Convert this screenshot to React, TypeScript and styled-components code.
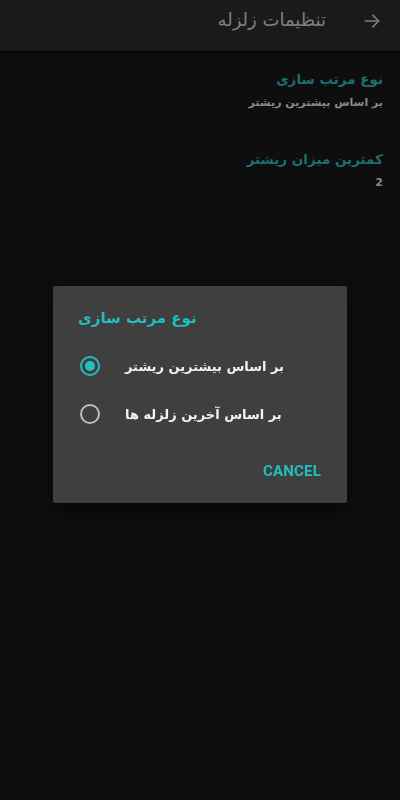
import React, { FC } from "react";
import styled, { createGlobalStyle } from "styled-components";

const GlobalStyle = createGlobalStyle`
  html, body {
    margin: 0;
    padding: 0;
    background: #0e0e0e;
  }
  #root {
    min-height: 100vh;
  }
`;

const persian = `"DejaVu Sans", "Noto Sans", sans-serif`;

const Page = styled.div`
  min-height: 100vh;
  background: #0e0e0e;
  font-family: ${persian};
`;

const TopBar = styled.header`
  height: 51px;
  background: #1a1a1a;
  display: flex;
  align-items: flex-start;
  justify-content: flex-end;
  padding: 6px 18px 0 0;
  box-sizing: border-box;
  gap: 36px;
  direction: ltr;
  box-shadow: 0 2px 4px rgba(0, 0, 0, 0.5);
`;

const TopTitle = styled.h1`
  margin: 0;
  font-size: 18px;
  font-weight: normal;
  line-height: 28px;
  color: #808080;
  direction: rtl;
`;

const BackButton = styled.span`
  display: flex;
  align-items: center;
  height: 30px;
  color: #7e7e7e;
`;

const Settings = styled.div`
  direction: rtl;
  padding: 18px 17px 0 0;
  display: flex;
  flex-direction: column;
  gap: 36px;
`;

const SettingItem = styled.div`
  display: flex;
  flex-direction: column;
  gap: 4px;
`;

const SettingTitle = styled.div`
  font-size: 13.5px;
  font-weight: bold;
  line-height: 20px;
  color: #1b6f6f;
`;

const SettingValue = styled.div`
  font-size: 11px;
  font-weight: bold;
  line-height: 20px;
  color: #8a8a8a;
`;

const Scrim = styled.div`
  position: fixed;
  inset: 0;
  display: flex;
  align-items: center;
  justify-content: center;
  padding-bottom: 11px;
  box-sizing: border-box;
`;

const Dialog = styled.div`
  width: 294px;
  height: 217px;
  box-sizing: border-box;
  background: #3f3f3f;
  border-radius: 2px;
  box-shadow: 0 6px 18px rgba(0, 0, 0, 0.6);
  padding: 20px 26px 0 25px;
  display: flex;
  flex-direction: column;
  direction: ltr;
`;

const DialogTitle = styled.h2`
  margin: 0 0 12px 0;
  font-size: 15px;
  font-weight: bold;
  line-height: 24px;
  color: #22bfbf;
  direction: rtl;
  align-self: flex-start;
`;

const Option = styled.label`
  display: flex;
  align-items: center;
  height: 48px;
  gap: 25px;
  padding-left: 2px;
`;

const Radio = styled.span<{ $checked?: boolean }>`
  width: 20px;
  height: 20px;
  box-sizing: border-box;
  border-radius: 50%;
  border: 2px solid ${(p) => (p.$checked ? "#22bfbf" : "#bdbdbd")};
  display: flex;
  align-items: center;
  justify-content: center;

  &::after {
    content: "";
    width: 10px;
    height: 10px;
    border-radius: 50%;
    background: #22bfbf;
    display: ${(p) => (p.$checked ? "block" : "none")};
  }
`;

const OptionText = styled.span`
  font-size: 13px;
  font-weight: bold;
  color: #f2f2f2;
  direction: rtl;
`;

const Actions = styled.div`
  display: flex;
  justify-content: flex-end;
  margin-top: 22px;
`;

const TextButton = styled.button`
  background: none;
  border: none;
  padding: 0;
  font-family: Roboto, "Liberation Sans", sans-serif;
  font-size: 15px;
  font-weight: bold;
  letter-spacing: 0.2px;
  color: #22bfbf;
  line-height: 22px;
`;

const ArrowIcon: FC = () => (
  <svg width="20" height="20" viewBox="0 0 24 24" fill="none" stroke="currentColor" strokeWidth="2" strokeLinecap="round" strokeLinejoin="round">
    <path d="M4 12h16" />
    <path d="M13 5l7 7-7 7" />
  </svg>
);

const options = [
  { label: "بر اساس بیشترین ریشتر", checked: true },
  { label: "بر اساس آخرین زلزله ها", checked: false },
];

const App: FC = () => {
  return (
    <Page>
      <GlobalStyle />
      <TopBar>
        <TopTitle>تنظیمات زلزله</TopTitle>
        <BackButton>
          <ArrowIcon />
        </BackButton>
      </TopBar>

      <Settings>
        <SettingItem>
          <SettingTitle>نوع مرتب سازی</SettingTitle>
          <SettingValue>بر اساس بیشترین ریشتر</SettingValue>
        </SettingItem>
        <SettingItem>
          <SettingTitle>کمترین میزان ریشتر</SettingTitle>
          <SettingValue>2</SettingValue>
        </SettingItem>
      </Settings>

      <Scrim>
        <Dialog>
          <DialogTitle>نوع مرتب سازی</DialogTitle>
          {options.map((o) => (
            <Option key={o.label}>
              <Radio $checked={o.checked} />
              <OptionText>{o.label}</OptionText>
            </Option>
          ))}
          <Actions>
            <TextButton>CANCEL</TextButton>
          </Actions>
        </Dialog>
      </Scrim>
    </Page>
  );
};

export default App;
